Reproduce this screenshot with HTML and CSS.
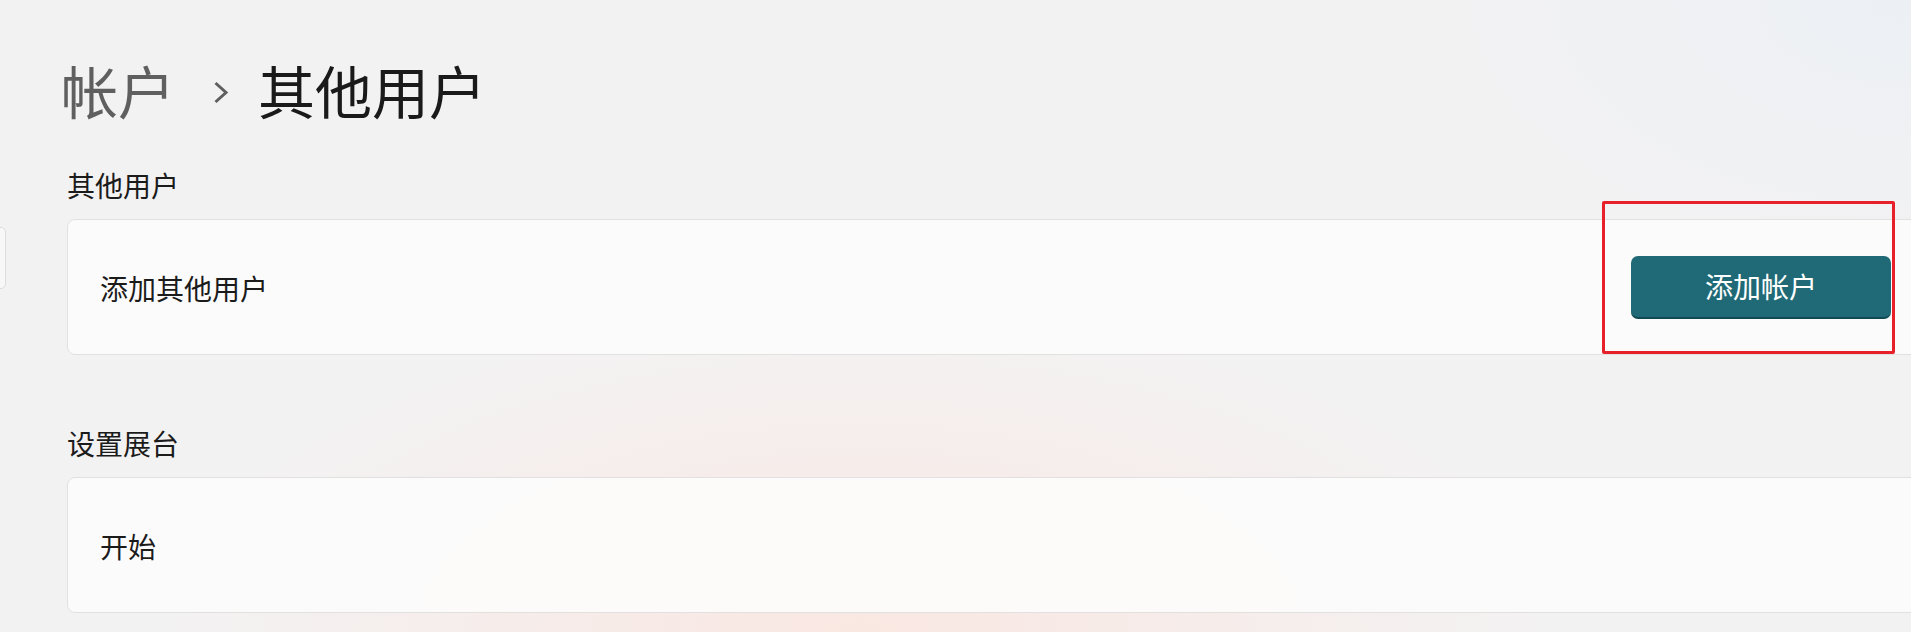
FILE: index.html
```html
<!DOCTYPE html>
<html lang="zh-CN">
<head>
<meta charset="utf-8">
<title>其他用户</title>
<link rel="stylesheet" href="styles.css">
</head>
<body>
<div class="nav-edge"></div>
<main class="page">
  <h1 class="breadcrumb">
    <span class="crumb-parent">帐户</span>
    <svg class="crumb-chevron" width="16" height="24" viewBox="0 0 16 24"><path d="M2.5 3 L13 12.5 L2.5 22" fill="none" stroke="#5f5f5f" stroke-width="3"/></svg>
    <span class="crumb-current">其他用户</span>
  </h1>

  <section class="group">
    <h2 class="group-title">其他用户</h2>
    <div class="card">
      <span class="card-label">添加其他用户</span>
      <div class="action">
        <button class="btn-primary">添加帐户</button>
        <div class="highlight"></div>
      </div>
    </div>
  </section>

  <section class="group group-second">
    <h2 class="group-title">设置展台</h2>
    <div class="card">
      <span class="card-label">开始</span>
    </div>
  </section>
</main>
</body>
</html>
```

FILE: styles.css
```css
html, body {
  margin: 0;
  padding: 0;
  height: 100%;
}
body {
  overflow: hidden;
  font-family: "Noto Sans CJK SC", "Noto Sans", sans-serif;
  color: #1b1b1b;
  background:
    radial-gradient(ellipse 1000px 460px at 45% 100%, rgba(250, 230, 224, 0.9), rgba(250, 230, 224, 0) 70%),
    radial-gradient(ellipse 700px 400px at 100% 0%, rgba(236, 240, 244, 1), rgba(236, 240, 244, 0) 70%),
    #f3f2f3;
  position: relative;
}
.nav-edge {
  position: absolute;
  left: -10px;
  top: 227px;
  width: 14px;
  height: 60px;
  border: 1px solid #dedcdc;
  border-radius: 5px;
  background: #f8f8f8;
}
.page {
  padding: 61px 0 0 67px;
}
.breadcrumb {
  margin: 0 0 0 -6px;
  display: flex;
  align-items: center;
  font-weight: 400;
  font-size: 57px;
  line-height: 56px;
  height: 56px;
}
.crumb-parent {
  color: #5f5f5f;
}
.crumb-chevron {
  margin: 6px 29px 0 38px;
}
.crumb-current {
  color: #1a1a1a;
}
.group {
  margin-top: 54px;
}
.group-second {
  margin-top: 74px;
}
.group-title {
  margin: 0 0 20px 0;
  font-size: 28px;
  line-height: 28px;
  font-weight: 400;
  color: #1b1b1b;
}
.card {
  box-sizing: border-box;
  height: 136px;
  margin-right: -20px;
  border: 1.5px solid #e3e1e0;
  border-radius: 8px;
  background: rgba(253, 252, 252, 0.9);
  display: flex;
  align-items: center;
  justify-content: space-between;
  padding: 0 39px 0 32px;
}
.card-label {
  font-size: 28px;
  line-height: 28px;
  color: #1b1b1b;
  margin-top: 2px;
}
.action {
  position: relative;
}
.btn-primary {
  box-sizing: border-box;
  width: 260px;
  height: 63px;
  border: none;
  border-bottom: 2px solid #0f4a53;
  border-radius: 7px;
  background: #1f6a76;
  color: #ffffff;
  font-family: "Noto Sans CJK SC", "Noto Sans", sans-serif;
  font-size: 28px;
  line-height: 28px;
  padding: 0;
  display: block;
}
.highlight {
  position: absolute;
  left: -29px;
  top: -55px;
  width: 293px;
  height: 153px;
  box-sizing: border-box;
  border: 3px solid #e8202a;
  border-radius: 2px;
}
```
